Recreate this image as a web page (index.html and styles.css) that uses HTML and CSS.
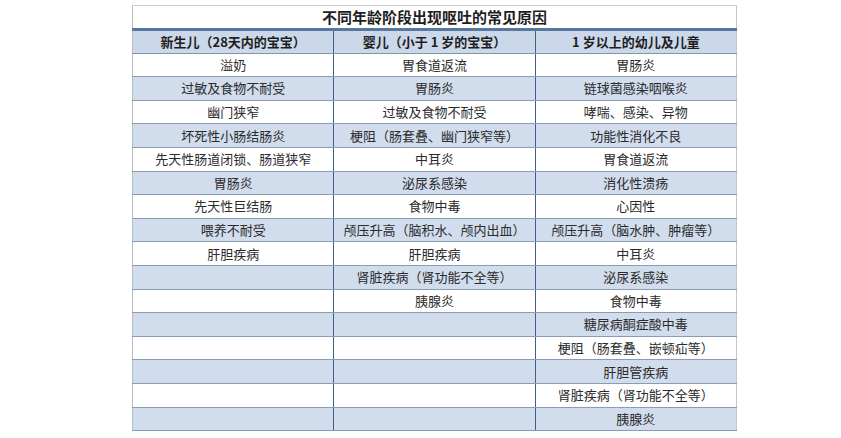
FILE: index.html
```html
<!DOCTYPE html>
<html lang="zh">
<head>
<meta charset="utf-8">
<title>不同年龄阶段出现呕吐的常见原因</title>
<link rel="stylesheet" href="styles.css">
</head>
<body>
<table class="causes">
  <thead>
    <tr class="title-row"><th colspan="3">不同年龄阶段出现呕吐的常见原因</th></tr>
    <tr class="head-row"><th>新生儿（28天内的宝宝）</th><th>婴儿（小于 1 岁的宝宝）</th><th>1 岁以上的幼儿及儿童</th></tr>
  </thead>
  <tbody>
    <tr><td>溢奶</td><td>胃食道返流</td><td>胃肠炎</td></tr>
    <tr><td>过敏及食物不耐受</td><td>胃肠炎</td><td>链球菌感染咽喉炎</td></tr>
    <tr><td>幽门狭窄</td><td>过敏及食物不耐受</td><td>哮喘、感染、异物</td></tr>
    <tr><td>坏死性小肠结肠炎</td><td>梗阻（肠套叠、幽门狭窄等）</td><td>功能性消化不良</td></tr>
    <tr><td>先天性肠道闭锁、肠道狭窄</td><td>中耳炎</td><td>胃食道返流</td></tr>
    <tr><td>胃肠炎</td><td>泌尿系感染</td><td>消化性溃疡</td></tr>
    <tr><td>先天性巨结肠</td><td>食物中毒</td><td>心因性</td></tr>
    <tr><td>喂养不耐受</td><td>颅压升高（脑积水、颅内出血）</td><td>颅压升高（脑水肿、肿瘤等）</td></tr>
    <tr><td>肝胆疾病</td><td>肝胆疾病</td><td>中耳炎</td></tr>
    <tr><td></td><td>肾脏疾病（肾功能不全等）</td><td>泌尿系感染</td></tr>
    <tr><td></td><td>胰腺炎</td><td>食物中毒</td></tr>
    <tr><td></td><td></td><td>糖尿病酮症酸中毒</td></tr>
    <tr><td></td><td></td><td>梗阻（肠套叠、嵌顿疝等）</td></tr>
    <tr><td></td><td></td><td>肝胆管疾病</td></tr>
    <tr><td></td><td></td><td>肾脏疾病（肾功能不全等）</td></tr>
    <tr><td></td><td></td><td>胰腺炎</td></tr>
  </tbody>
</table>
</body>
</html>
```
FILE: styles.css
```css
html, body {
  margin: 0;
  padding: 0;
  background: #ffffff;
}

body {
  padding: 5px 0 0 132px;
  font-family: "Noto Sans CJK SC", "DejaVu Sans", sans-serif;
  color: #2b2b2b;
}

.causes {
  border-collapse: collapse;
  width: 605px;
  table-layout: fixed;
  border-left: 1px solid #b9bcc2;
  border-top: 1px solid #c8ccd2;
}

.causes th,
.causes td {
  height: 23.6px;
  padding: 0;
  text-align: center;
  vertical-align: middle;
  box-sizing: border-box;
  font-size: 13px;
  line-height: 16px;
  white-space: nowrap;
}

.title-row th {
  font-size: 15px;
  font-weight: bold;
  color: #1e1e1e;
  background: #ffffff;
  border-bottom: 3px solid #57779c;
  height: 24px;
}

.head-row th {
  background: #cbd8ea;
  font-weight: bold;
  color: #1e1e1e;
  border-bottom: 1px solid #8195ad;
  border-right: 1px solid #3f5f86;
}

.causes td {
  border-bottom: 1px solid #8a9cb3;
  border-right: 1px solid #3f5f86;
  background: #ffffff;
  font-weight: normal;
}

.causes tbody tr:nth-child(even) td {
  background: #d1dcec;
}

.causes th:last-child,
.causes td:last-child {
  border-right: 1px solid #c4c8ce;
}
```
